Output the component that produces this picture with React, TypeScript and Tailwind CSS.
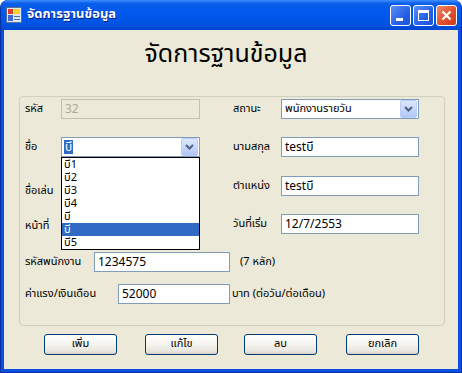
import React from "react"

const thai = "font-['Tahoma','Noto_Sans_Thai','Loma','Garuda','Noto_Sans',sans-serif]"

const items = ["บี1", "บี2", "บี3", "บี4", "บี", "บี", "บี5"]

function ComboArrow() {
  return (
    <div className="ml-auto mr-[1px] flex h-[18px] w-[17px] items-center justify-center rounded-[2px] border border-[#b9cdf6] bg-[linear-gradient(to_bottom,#dde8fe,#c3d4fa_60%,#b1c7f7)]">
      <svg width="9" height="6" viewBox="0 0 9 6">
        <path d="M1 1 L4.5 4.5 L8 1" fill="none" stroke="#4d6185" strokeWidth="2" />
      </svg>
    </div>
  )
}

function TextBox({ value, width, disabled }: { value?: string; width: number; disabled?: boolean }) {
  return (
    <div
      style={{ width }}
      className={
        "flex h-[20px] items-center border px-[3px] text-[12px] " +
        (disabled ? "border-[#c2c0b2] bg-[#ece9d8] text-[#aca899]" : "border-[#7f9db9] bg-white text-black")
      }
    >
      {value}
    </div>
  )
}

function Row({ label, labelW, children, mt }: { label: string; labelW: number; children: React.ReactNode; mt: string }) {
  return (
    <div className={"flex h-[20px] items-center " + mt}>
      <span style={{ width: labelW }} className="text-[11px] text-black">
        {label}
      </span>
      {children}
    </div>
  )
}

function XpButton({ label, ml }: { label: string; ml: string }) {
  return (
    <div
      className={
        "flex h-[21px] w-[73px] items-center justify-center rounded-[3px] border border-[#003c74] bg-[linear-gradient(to_bottom,#ffffff,#f4f3ee_50%,#e8e6de_85%,#d6d0c5)] text-[11px] text-black " +
        ml
      }
    >
      {label}
    </div>
  )
}

export default function App() {
  return (
    <div className={"flex h-[373px] w-[462px] flex-col overflow-hidden rounded-t-[8px] border-x border-b border-[#0831a8] bg-[#0a4fe0] " + thai}>
      {/* TITLE BAR */}
      <div className="flex h-[30px] shrink-0 items-center bg-[linear-gradient(to_bottom,#3d8dff_0%,#0a5ee9_12%,#0058ee_40%,#0054e3_80%,#0046cf_100%)] pl-[5px] pr-[4px]">
        <svg width="16" height="16" viewBox="0 0 16 16">
          <rect x="0.5" y="0.5" width="15" height="15" fill="#dfe6f3" stroke="#5a6f96" />
          <rect x="2" y="2" width="5" height="5" fill="#e23b2a" />
          <rect x="8" y="2" width="6" height="5" fill="#f6d22c" />
          <rect x="2" y="8" width="5" height="6" fill="#3c6bd8" />
          <rect x="8" y="9" width="6" height="1" fill="#5a6f96" />
          <rect x="8" y="12" width="6" height="1" fill="#5a6f96" />
        </svg>
        <span className="ml-[5px] text-[13px] font-bold text-white [text-shadow:1px_1px_0_#0a1f80]">จัดการฐานข้อมูล</span>
        <div className="ml-auto flex gap-[2px]">
          <div className="flex h-[21px] w-[21px] items-end justify-start rounded-[3px] border border-white bg-[linear-gradient(135deg,#5b8ef7,#2662e6_60%,#1a50d4)] pb-[4px] pl-[5px]">
            <div className="h-[3px] w-[7px] bg-white" />
          </div>
          <div className="flex h-[21px] w-[21px] items-center justify-center rounded-[3px] border border-white bg-[linear-gradient(135deg,#5b8ef7,#2662e6_60%,#1a50d4)]">
            <div className="h-[11px] w-[11px] border-[1px] border-t-[3px] border-white" />
          </div>
          <div className="flex h-[21px] w-[21px] items-center justify-center rounded-[3px] border border-white bg-[linear-gradient(135deg,#f08a6c,#e2502c_55%,#c83c1e)]">
            <svg width="11" height="11" viewBox="0 0 11 11">
              <path d="M1.5 1.5 L9.5 9.5 M9.5 1.5 L1.5 9.5" stroke="white" strokeWidth="2.2" />
            </svg>
          </div>
        </div>
      </div>

      {/* CLIENT */}
      <div className="mx-[3px] mb-[3px] flex flex-1 flex-col bg-[#ece9d8]">
        <div className="flex h-[50px] items-center justify-center pr-[10px] text-[25px] text-black">จัดการฐานข้อมูล</div>

        <div className="ml-[15px] mt-[16px] flex h-[230px] w-[426px] flex-col rounded-[4px] border border-[#d0d0bf] pl-[5px] pt-[2px]">
          <div className="flex">
            {/* LEFT COLUMN */}
            <div className="flex flex-col">
              <Row label="รหัส" labelW={36} mt="">
                <TextBox value="32" width={139} disabled />
              </Row>
              <Row label="ชื่อ" labelW={36} mt="mt-[18px]">
                <div className="relative">
                  <div className="flex h-[20px] w-[139px] items-center border border-[#7f9db9] bg-white pl-[2px] text-[12px]">
                    <span className="bg-[#316ac5] px-[1px] leading-[14px] text-white">บี</span>
                    <ComboArrow />
                  </div>
                  <div className="absolute left-0 top-full z-10 flex w-[139px] flex-col border border-black bg-white">
                    {items.map((t, i) => (
                      <div
                        key={i}
                        className={
                          "h-[13px] overflow-hidden pl-[2px] text-[11px] leading-[13px] " +
                          (i === 5 ? "bg-[#316ac5] text-white" : "text-black")
                        }
                      >
                        {t}
                      </div>
                    ))}
                  </div>
                </div>
              </Row>
              <Row label="ชื่อเล่น" labelW={36} mt="mt-[24px]">
                <TextBox width={139} />
              </Row>
              <Row label="หน้าที่" labelW={36} mt="mt-[15px]">
                <TextBox width={139} />
              </Row>
            </div>

            {/* RIGHT COLUMN */}
            <div className="ml-[33px] flex flex-col">
              <Row label="สถานะ" labelW={48} mt="">
                <div className="flex h-[20px] w-[138px] items-center border border-[#7f9db9] bg-white pl-[3px] text-[11px]">
                  พนักงานรายวัน
                  <ComboArrow />
                </div>
              </Row>
              <Row label="นามสกุล" labelW={48} mt="mt-[18px]">
                <TextBox value="testบี" width={138} />
              </Row>
              <Row label="ตำแหน่ง" labelW={48} mt="mt-[19px]">
                <TextBox value="testบี" width={138} />
              </Row>
              <Row label="วันที่เริ่ม" labelW={48} mt="mt-[18px]">
                <TextBox value="12/7/2553" width={138} />
              </Row>
            </div>
          </div>

          <Row label="รหัสพนักงาน" labelW={69} mt="mt-[16px]">
            <TextBox value="1234575" width={136} />
            <span className="ml-[10px] text-[11px]">(7 หลัก)</span>
          </Row>
          <Row label="ค่าแรง/เงินเดือน" labelW={93} mt="mt-[12px]">
            <TextBox value="52000" width={112} />
            <span className="ml-[2px] text-[11px]">บาท (ต่อวัน/ต่อเดือน)</span>
          </Row>
        </div>

        {/* BUTTONS */}
        <div className="mt-[8px] flex">
          <XpButton label="เพิ่ม" ml="ml-[40px]" />
          <XpButton label="แก้ไข" ml="ml-[28px]" />
          <XpButton label="ลบ" ml="ml-[26px]" />
          <XpButton label="ยกเลิก" ml="ml-[29px]" />
        </div>
      </div>
    </div>
  )
}
